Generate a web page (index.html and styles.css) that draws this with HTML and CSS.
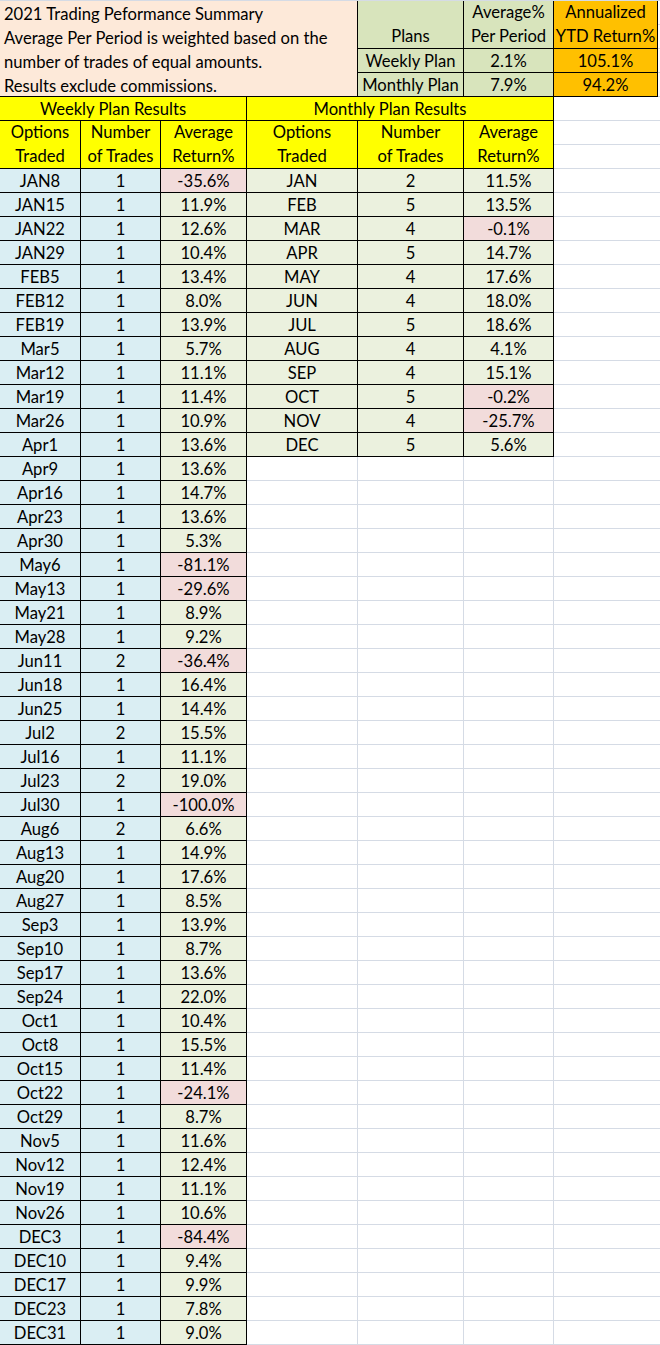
FILE: index.html
```html
<!DOCTYPE html>
<html lang="en">
<head>
<meta charset="utf-8">
<title>2021 Trading Peformance Summary</title>
<link rel="stylesheet" href="styles.css">
</head>
<body>
<div class="sheet">
  <div class="top">
    <div class="note">
      <p>2021 Trading Peformance Summary</p>
      <p>Average Per Period is weighted based on the</p>
      <p>number of trades of equal amounts.</p>
      <p>Results exclude commissions.</p>
    </div>
    <div class="summary">
      <div class="cell tall green"><span>Plans</span></div>
      <div class="cell tall green"><span>Average%</span><span>Per Period</span></div>
      <div class="cell tall orange"><span>Annualized</span><span>YTD Return%</span></div>
      <div class="cell green">Weekly Plan</div>
      <div class="cell green">2.1%</div>
      <div class="cell orange">105.1%</div>
      <div class="cell green">Monthly Plan</div>
      <div class="cell green">7.9%</div>
      <div class="cell orange">94.2%</div>
    </div>
  </div>

  <div class="tables">
    <div class="grid weekly">
      <div class="cell title">Weekly Plan Results</div>
      <div class="cell head"><span>Options</span><span>Traded</span></div>
      <div class="cell head"><span>Number</span><span>of Trades</span></div>
      <div class="cell head"><span>Average</span><span>Return%</span></div>

      <div class="cell blue">JAN8</div><div class="cell blue">1</div><div class="cell neg">-35.6%</div>
      <div class="cell blue">JAN15</div><div class="cell blue">1</div><div class="cell pos">11.9%</div>
      <div class="cell blue">JAN22</div><div class="cell blue">1</div><div class="cell pos">12.6%</div>
      <div class="cell blue">JAN29</div><div class="cell blue">1</div><div class="cell pos">10.4%</div>
      <div class="cell blue">FEB5</div><div class="cell blue">1</div><div class="cell pos">13.4%</div>
      <div class="cell blue">FEB12</div><div class="cell blue">1</div><div class="cell pos">8.0%</div>
      <div class="cell blue">FEB19</div><div class="cell blue">1</div><div class="cell pos">13.9%</div>
      <div class="cell blue">Mar5</div><div class="cell blue">1</div><div class="cell pos">5.7%</div>
      <div class="cell blue">Mar12</div><div class="cell blue">1</div><div class="cell pos">11.1%</div>
      <div class="cell blue">Mar19</div><div class="cell blue">1</div><div class="cell pos">11.4%</div>
      <div class="cell blue">Mar26</div><div class="cell blue">1</div><div class="cell pos">10.9%</div>
      <div class="cell blue">Apr1</div><div class="cell blue">1</div><div class="cell pos">13.6%</div>
      <div class="cell blue">Apr9</div><div class="cell blue">1</div><div class="cell pos">13.6%</div>
      <div class="cell blue">Apr16</div><div class="cell blue">1</div><div class="cell pos">14.7%</div>
      <div class="cell blue">Apr23</div><div class="cell blue">1</div><div class="cell pos">13.6%</div>
      <div class="cell blue">Apr30</div><div class="cell blue">1</div><div class="cell pos">5.3%</div>
      <div class="cell blue">May6</div><div class="cell blue">1</div><div class="cell neg">-81.1%</div>
      <div class="cell blue">May13</div><div class="cell blue">1</div><div class="cell neg">-29.6%</div>
      <div class="cell blue">May21</div><div class="cell blue">1</div><div class="cell pos">8.9%</div>
      <div class="cell blue">May28</div><div class="cell blue">1</div><div class="cell pos">9.2%</div>
      <div class="cell blue">Jun11</div><div class="cell blue">2</div><div class="cell neg">-36.4%</div>
      <div class="cell blue">Jun18</div><div class="cell blue">1</div><div class="cell pos">16.4%</div>
      <div class="cell blue">Jun25</div><div class="cell blue">1</div><div class="cell pos">14.4%</div>
      <div class="cell blue">Jul2</div><div class="cell blue">2</div><div class="cell pos">15.5%</div>
      <div class="cell blue">Jul16</div><div class="cell blue">1</div><div class="cell pos">11.1%</div>
      <div class="cell blue">Jul23</div><div class="cell blue">2</div><div class="cell pos">19.0%</div>
      <div class="cell blue">Jul30</div><div class="cell blue">1</div><div class="cell neg">-100.0%</div>
      <div class="cell blue">Aug6</div><div class="cell blue">2</div><div class="cell pos">6.6%</div>
      <div class="cell blue">Aug13</div><div class="cell blue">1</div><div class="cell pos">14.9%</div>
      <div class="cell blue">Aug20</div><div class="cell blue">1</div><div class="cell pos">17.6%</div>
      <div class="cell blue">Aug27</div><div class="cell blue">1</div><div class="cell pos">8.5%</div>
      <div class="cell blue">Sep3</div><div class="cell blue">1</div><div class="cell pos">13.9%</div>
      <div class="cell blue">Sep10</div><div class="cell blue">1</div><div class="cell pos">8.7%</div>
      <div class="cell blue">Sep17</div><div class="cell blue">1</div><div class="cell pos">13.6%</div>
      <div class="cell blue">Sep24</div><div class="cell blue">1</div><div class="cell pos">22.0%</div>
      <div class="cell blue">Oct1</div><div class="cell blue">1</div><div class="cell pos">10.4%</div>
      <div class="cell blue">Oct8</div><div class="cell blue">1</div><div class="cell pos">15.5%</div>
      <div class="cell blue">Oct15</div><div class="cell blue">1</div><div class="cell pos">11.4%</div>
      <div class="cell blue">Oct22</div><div class="cell blue">1</div><div class="cell neg">-24.1%</div>
      <div class="cell blue">Oct29</div><div class="cell blue">1</div><div class="cell pos">8.7%</div>
      <div class="cell blue">Nov5</div><div class="cell blue">1</div><div class="cell pos">11.6%</div>
      <div class="cell blue">Nov12</div><div class="cell blue">1</div><div class="cell pos">12.4%</div>
      <div class="cell blue">Nov19</div><div class="cell blue">1</div><div class="cell pos">11.1%</div>
      <div class="cell blue">Nov26</div><div class="cell blue">1</div><div class="cell pos">10.6%</div>
      <div class="cell blue">DEC3</div><div class="cell blue">1</div><div class="cell neg">-84.4%</div>
      <div class="cell blue">DEC10</div><div class="cell blue">1</div><div class="cell pos">9.4%</div>
      <div class="cell blue">DEC17</div><div class="cell blue">1</div><div class="cell pos">9.9%</div>
      <div class="cell blue">DEC23</div><div class="cell blue">1</div><div class="cell pos">7.8%</div>
      <div class="cell blue">DEC31</div><div class="cell blue">1</div><div class="cell pos">9.0%</div>
    </div>

    <div class="grid monthly">
      <div class="cell title">Monthly Plan Results</div>
      <div class="cell head"><span>Options</span><span>Traded</span></div>
      <div class="cell head"><span>Number</span><span>of Trades</span></div>
      <div class="cell head"><span>Average</span><span>Return%</span></div>

      <div class="cell pos">JAN</div><div class="cell pos">2</div><div class="cell pos">11.5%</div>
      <div class="cell pos">FEB</div><div class="cell pos">5</div><div class="cell pos">13.5%</div>
      <div class="cell pos">MAR</div><div class="cell pos">4</div><div class="cell neg">-0.1%</div>
      <div class="cell pos">APR</div><div class="cell pos">5</div><div class="cell pos">14.7%</div>
      <div class="cell pos">MAY</div><div class="cell pos">4</div><div class="cell pos">17.6%</div>
      <div class="cell pos">JUN</div><div class="cell pos">4</div><div class="cell pos">18.0%</div>
      <div class="cell pos">JUL</div><div class="cell pos">5</div><div class="cell pos">18.6%</div>
      <div class="cell pos">AUG</div><div class="cell pos">4</div><div class="cell pos">4.1%</div>
      <div class="cell pos">SEP</div><div class="cell pos">4</div><div class="cell pos">15.1%</div>
      <div class="cell pos">OCT</div><div class="cell pos">5</div><div class="cell neg">-0.2%</div>
      <div class="cell pos">NOV</div><div class="cell pos">4</div><div class="cell neg">-25.7%</div>
      <div class="cell pos">DEC</div><div class="cell pos">5</div><div class="cell pos">5.6%</div>
    </div>
  </div>
</div>
</body>
</html>
```

FILE: styles.css
```css
* {
  box-sizing: border-box;
  margin: 0;
  padding: 0;
}

body {
  margin: 0;
  background: #ffffff;
  font-family: Lato, "Liberation Sans", sans-serif;
  font-size: 16.6px;
  color: #000000;
}

.sheet {
  width: 660px;
  height: 1345px;
  padding-top: 1px;
  overflow: hidden;
  background-color: #ffffff;
  background-image:
    linear-gradient(to right,
      transparent 0 246px, #d5dbe5 246px 247px,
      transparent 247px 357px, #d5dbe5 357px 358px,
      transparent 358px 463px, #d5dbe5 463px 464px,
      transparent 464px 553px, #d5dbe5 553px 554px,
      transparent 554px),
    repeating-linear-gradient(to bottom, #d5dbe5 0 1px, transparent 1px 24px);
}

.top {
  display: flex;
}

.note {
  width: 358px;
  height: 96px;
  padding-left: 4px;
  padding-top: 1px;
  background: #fde9d9;
  border-right: 1px solid #000;
  border-bottom: 1px solid #000;
}

.note p {
  height: 24px;
  line-height: 24px;
  white-space: nowrap;
}

.summary {
  display: grid;
  grid-template-columns: 106px 90px 104px;
  grid-template-rows: 48px 24px 24px;
}

.cell {
  display: flex;
  align-items: center;
  justify-content: center;
  padding-top: 2px;
  line-height: 21px;
  white-space: nowrap;
  border-right: 1px solid #000;
  border-bottom: 1px solid #000;
}

.cell span {
  display: block;
  line-height: 23px;
  height: 23px;
}

.cell.tall,
.cell.head {
  flex-direction: column;
  justify-content: flex-end;
  align-items: center;
  padding-top: 0;
}

.cell.tall span:first-child:not(:last-child),
.cell.head span:first-child {
  height: 24px;
  line-height: 23px;
}

.green { background: #d8e4bc; }
.orange { background: #ffc000; }

.tables {
  display: flex;
  align-items: flex-start;
}

.grid {
  display: grid;
  grid-auto-rows: 24px;
}

.weekly { grid-template-columns: 81px 80px 86px; }
.monthly { grid-template-columns: 111px 106px 90px; }

.title {
  grid-column: 1 / -1;
  padding-right: 20px;
  background: #ffff00;
}

.head {
  grid-row: span 2;
  background: #ffff00;
}

.blue { background: #daeef3; }
.pos { background: #ebf1de; }
.neg { background: #f2dcdb; }
```
